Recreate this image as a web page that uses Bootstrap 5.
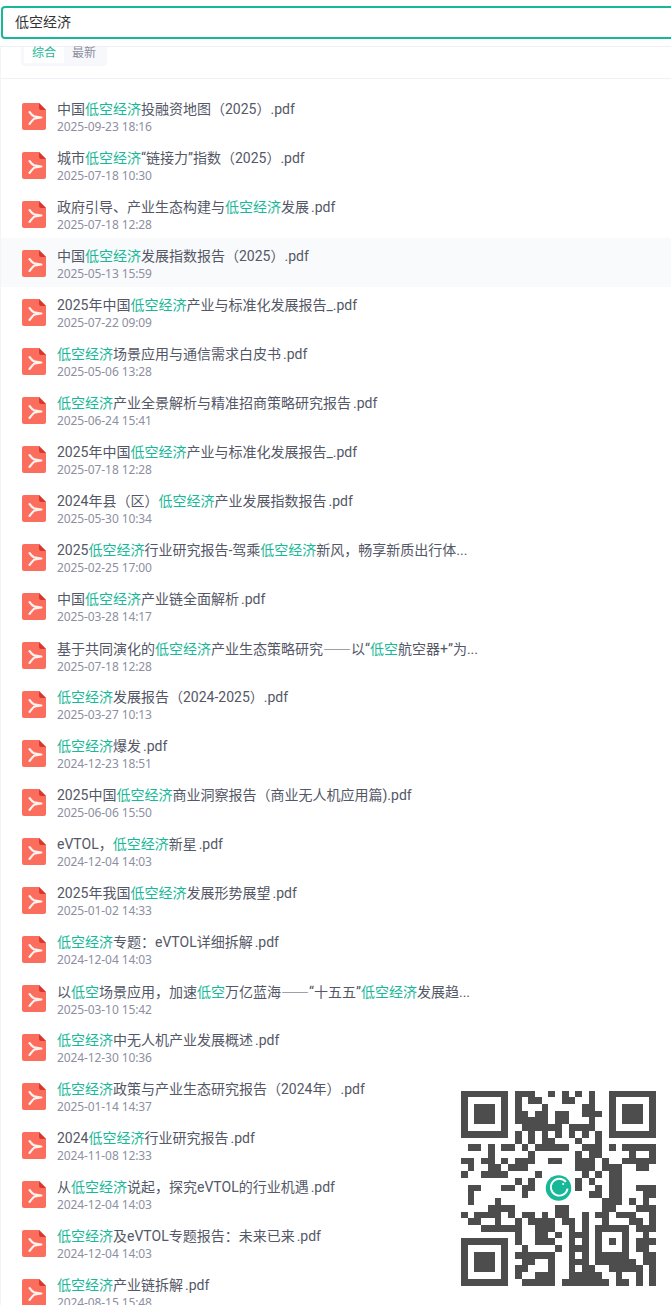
<!DOCTYPE html>
<html lang="zh-CN">
<head>
    <meta charset="UTF-8">
    <title>低空经济 - 搜索</title>
    <link href="https://cdn.jsdelivr.net/npm/bootstrap@5.3.0/dist/css/bootstrap.min.css" rel="stylesheet">
    <style>
        html, body { height: 1305px; overflow: hidden; }
        body { font-family: Roboto, "Noto Sans CJK SC", sans-serif; background: #fff; }
        .search-wrap { height: 47px; padding: 6px 0 0 1px; border-bottom: 1px solid #eff0f4; width: 700px; }
        .search-box { height: 33px; border: 2px solid #17b897; border-radius: 4px; padding: 0 12px; font-size: 14px; line-height: 29px; color: #333; }
        .result-page { border-left: 1px solid #f3f4f8; }
        .tab-area { height: 32px; padding-left: 20px; border-bottom: 1px solid #f0f1f4; }
        .tab-box { width: 86px; height: 19px; background: #f7f8fb; border-radius: 0 0 4px 4px; padding: 0 3px; font-size: 12px; line-height: 12px; }
        .tab-on { width: 40px; height: 16px; background: #fff; color: #17b897; text-align: center; }
        .tab-off { width: 40px; color: #8b8d9c; text-align: center; }
        .file-list { padding-top: 12px; }
        .file-row { height: 49px; padding: 9px 0 0 21px; }
        .file-row.hover-row { background: #f9fafc; }
        .file-icon { width: 24px; height: 27px; margin-top: 3px; margin-right: 11px; flex: none; }
        .file-name { font-size: 14px; line-height: 19px; color: #545866; white-space: nowrap; word-spacing: -1.5px; }
        .file-name em { font-style: normal; color: #17b897; }
        .cjk-dash { font-family: "Noto Sans CJK SC", sans-serif; }
        .file-date { font-size: 12px; line-height: 15px; color: #8d8fa1; font-family: "Noto Sans", sans-serif; letter-spacing: -.1px; }
        .qr-panel { position: absolute; left: 451px; top: 1080px; width: 220px; height: 225px; background: #fff; }
        .qr-svg { position: absolute; left: 10px; top: 10px; width: 195px; height: 196px; }
    </style>
</head>
<body>
    <div class="search-wrap">
        <div class="search-box">低空经济</div>
    </div>
    <div class="result-page">
        <div class="tab-area">
            <div class="tab-box d-flex">
                <div class="tab-on">综合</div>
                <div class="tab-off">最新</div>
            </div>
        </div>
        <div class="file-list" id="fileList"></div>
    </div>

    <!-- QR code overlay -->
    <div class="qr-panel">
        <svg class="qr-svg" viewBox="0 0 29 29" shape-rendering="crispEdges">
            <path id="qrPath" fill="#4d4d4d" d=""></path>
            <g shape-rendering="auto">
                <circle cx="14.5" cy="14.5" r="2.3" fill="#fff"></circle>
                <circle cx="14.5" cy="14.5" r="1.9" fill="#17b897"></circle>
                <path d="M15.6 13.6a1.25 1.25 0 1 0 .25 1" fill="none" stroke="#fff" stroke-width=".28"></path>
                <circle cx="15.2" cy="13.9" r=".16" fill="#fff"></circle>
            </g>
        </svg>
    </div>

    <script src="https://cdn.jsdelivr.net/npm/bootstrap@5.3.0/dist/js/bootstrap.bundle.min.js"></script>
    <script>
        const files = [
            ['中国低空经济投融资地图（2025）.pdf', '2025-09-23 18:16'],
            ['城市低空经济“链接力”指数（2025）.pdf', '2025-07-18 10:30'],
            ['政府引导、产业生态构建与低空经济发展 .pdf', '2025-07-18 12:28'],
            ['中国低空经济发展指数报告（2025）.pdf', '2025-05-13 15:59'],
            ['2025年中国低空经济产业与标准化发展报告_.pdf', '2025-07-22 09:09'],
            ['低空经济场景应用与通信需求白皮书 .pdf', '2025-05-06 13:28'],
            ['低空经济产业全景解析与精准招商策略研究报告 .pdf', '2025-06-24 15:41'],
            ['2025年中国低空经济产业与标准化发展报告_.pdf', '2025-07-18 12:28'],
            ['2024年县（区）低空经济产业发展指数报告 .pdf', '2025-05-30 10:34'],
            ['2025低空经济行业研究报告-驾乘低空经济新风，畅享新质出行体...', '2025-02-25 17:00'],
            ['中国低空经济产业链全面解析 .pdf', '2025-03-28 14:17'],
            ['基于共同演化的低空经济产业生态策略研究——以“低空航空器+”为...', '2025-07-18 12:28'],
            ['低空经济发展报告（2024-2025）.pdf', '2025-03-27 10:13'],
            ['低空经济爆发 .pdf', '2024-12-23 18:51'],
            ['2025中国低空经济商业洞察报告（商业无人机应用篇).pdf', '2025-06-06 15:50'],
            ['eVTOL，低空经济新星 .pdf', '2024-12-04 14:03'],
            ['2025年我国低空经济发展形势展望 .pdf', '2025-01-02 14:33'],
            ['低空经济专题：eVTOL详细拆解 .pdf', '2024-12-04 14:03'],
            ['以低空场景应用，加速低空万亿蓝海——“十五五”低空经济发展趋...', '2025-03-10 15:42'],
            ['低空经济中无人机产业发展概述 .pdf', '2024-12-30 10:36'],
            ['低空经济政策与产业生态研究报告（2024年）.pdf', '2025-01-14 14:37'],
            ['2024低空经济行业研究报告 .pdf', '2024-11-08 12:33'],
            ['从低空经济说起，探究eVTOL的行业机遇 .pdf', '2024-12-04 14:03'],
            ['低空经济及eVTOL专题报告：未来已来 .pdf', '2024-12-04 14:03'],
            ['低空经济产业链拆解 .pdf', '2024-08-15 15:48']
        ];

        const pdfIcon = `<svg class="file-icon" viewBox="0 0 24 27">
            <path d="M2 0h15l7 7v18a2 2 0 0 1-2 2H2a2 2 0 0 1-2-2V2a2 2 0 0 1 2-2z" fill="#fb6e5e"></path>
            <path d="M17 0l7 7h-5a2 2 0 0 1-2-2z" fill="#d8382b"></path>
            <path d="M7.500 9C9 11 10.500 12.500 12 13.300c2.500.5 4.500.7 7.500 1.200-3 .4-5 .6-7.500 1.200C10.500 17 9 19 7.500 21" fill="none" stroke="#fff3f0" stroke-width="2.100" stroke-linecap="round" stroke-linejoin="round"></path>
        </svg>`;

        const markup = name => name
            .replace(/低空经济|低空/g, '<em>$&</em>')
            .replace('——', '<span class="cjk-dash">——</span>');

        document.getElementById('fileList').innerHTML = files.map((f, i) => `
            <div class="file-row d-flex${i === 3 ? ' hover-row' : ''}">
                ${pdfIcon}
                <div>
                    <div class="file-name">${markup(f[0])}</div>
                    <div class="file-date">${f[1]}</div>
                </div>
            </div>`).join('');

        // QR modules read off the screenshot: dark columns per row (finders drawn apart)
        const qr = [
            [8,9,10,13,15,17,19],
            [8,10,11,15,16,19],
            [8,12,18,19],
            [8,9,11,12,14,15,18,19,20],
            [8,9,10,11,12,14,15,19],
            [9,10,11,12,13,14,16,17,18,19],
            [8,10,12,14,16,18,20],
            [8,10,12,13,17,20],
            [1,2,4,6,7,9,11,12,13,14,15,18,19,20,22,24,25,26,27,28],
            [4,10,17,19,20,25,28],
            [0,1,3,4,6,8,9,10,13,14,17,18,19,21,24,25,26,27,28],
            [1,4,5,7,8,9,17,18,19,21,22,23,26,27],
            [0,3,4,5,6,11,18,20,22,23],
            [8,10,17,19,22,23],
            [1,2,6,7,9,10,17,20,22,23,26,27,28],
            [1,9,19,20,22,23,27,28],
            [1,5,21,22,23,25,27],
            [4,5,6,7,14,15,21,22,26,27,28],
            [0,2,3,4,5,7,9,10,12,14,15,18,20,21,23,24,25,28],
            [1,2,5,8,10,11,12,13,15,16,18,21,25,26,28],
            [3,4,5,6,7,8,11,12,13,16,18,20,21,22,23,24,26,27,28],
            [8,11,12,14,16,17,18,20,24,27],
            [8,11,12,13,16,18,20,22,24,26,27,28],
            [9,14,16,17,18,20,24,26,27],
            [8,9,10,11,12,13,16,18,20,21,22,23,24,27,28],
            [9,10,13,16,17,18,20,21,22,23,24,25,27,28],
            [8,9,13,16,18,19,22,23,24,25,26,28],
            [8,11,12,13,16,17,18,19,20,23,26,28],
            [9,10,11,12,13,15,16,17,18,19,20,21,23,24,26,28]
        ];
        let d = '';
        qr.forEach((cols, y) => cols.forEach(x => { d += `M${x} ${y}h1v1h-1z`; }));
        [[0, 0], [22, 0], [0, 22]].forEach(([x, y]) => {
            d += `M${x} ${y}h7v7h-7zM${x + 1} ${y + 1}v5h5v-5zM${x + 2} ${y + 2}h3v3h-3z`;
        });
        document.getElementById('qrPath').setAttribute('d', d);
    </script>
</body>
</html>
